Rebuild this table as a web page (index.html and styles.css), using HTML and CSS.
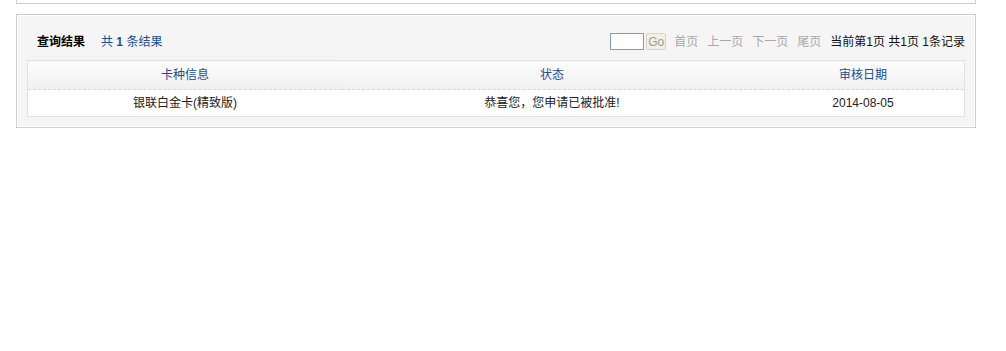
FILE: index.html
```html
<!DOCTYPE html>
<html lang="zh-CN">
<head>
  <meta charset="UTF-8"/>
  <title>申请进度查询</title>
  <link rel="stylesheet" href="styles.css">
</head>
<body>
  <div class="box box-top"></div>

  <div class="box result">
    <div class="result-bar">
      <div class="summary">
        <span class="summary-title">查询结果</span>
        <span class="summary-count">共 <b>1</b> 条结果</span>
      </div>
      <div class="pager">
        <input type="text" class="pager-input" />
        <button class="pager-go">Go</button>
        <span class="pager-link">首页</span>
        <span class="pager-link">上一页</span>
        <span class="pager-link">下一页</span>
        <span class="pager-link">尾页</span>
        <span class="pager-info">当前第1页 共1页 1条记录</span>
      </div>
    </div>

    <table class="result-table">
      <thead>
        <tr>
          <th class="col-card">卡种信息</th>
          <th class="col-status">状态</th>
          <th class="col-date">审核日期</th>
        </tr>
      </thead>
      <tbody>
        <tr>
          <td>银联白金卡(精致版)</td>
          <td>恭喜您，您申请已被批准!</td>
          <td>2014-08-05</td>
        </tr>
      </tbody>
    </table>
  </div>
</body>
</html>
```

FILE: styles.css
```css
body {
  margin: 0;
  padding: 0 30px 0 16px;
  background-color: #fff;
  font-family: "Liberation Sans", "Noto Sans CJK SC", sans-serif;
  font-size: 12px;
  line-height: 16px;
  color: #222;
}
.box {
  border: 1px solid #cfcfcf;
  box-shadow: inset 0 0 0 1px #fff;
}
.box-top {
  height: 20px;
  margin-top: -17px;
  border-top: none;
  background-color: #fff;
}
.result {
  margin-top: 10px;
  background-color: #f5f5f5;
  padding: 0 10px 10px 10px;
}
.result-bar {
  display: flex;
  justify-content: space-between;
  align-items: center;
  height: 45px;
}
.summary {
  display: flex;
  align-items: center;
  padding-left: 10px;
  padding-top: 8px;
}
.summary-title {
  font-weight: bold;
  color: #000;
  margin-right: 16px;
}
.summary-count {
  color: #1c4e96;
}
.summary-count b {
  font-family: "Liberation Sans", sans-serif;
}
.pager {
  display: flex;
  align-items: center;
  padding-top: 8px;
}
.pager-input {
  width: 34px;
  height: 17px;
  box-sizing: border-box;
  border: 1px solid #7f9db9;
  padding: 0;
  margin: 0 2px 0 0;
  background-color: #fff;
}
.pager-go {
  width: 20px;
  height: 17px;
  padding: 0;
  border: 1px solid #d8d4c4;
  border-radius: 2px;
  background-color: #f2efe4;
  color: #a09c8c;
  font-family: "Liberation Sans", sans-serif;
  font-size: 12px;
  margin-right: 8px;
}
.pager-link {
  color: #a8a8a8;
  margin-right: 9px;
}
.pager-info {
  color: #111;
}
.result-table {
  width: 100%;
  border-collapse: collapse;
  background-color: #fff;
  border: 1px solid #e2e2e2;
}
.result-table th,
.result-table td {
  padding: 0;
}
.result-table th {
  height: 28px;
  font-weight: normal;
  color: #1c4e96;
  background: linear-gradient(#fdfdfd, #f0f0f0);
  border-bottom: 1px dashed #d8d8d8;
}
.result-table td {
  height: 26px;
  text-align: center;
  color: #222;
}
.col-card {
  width: 314px;
}
.col-status {
  width: 420px;
}
```
